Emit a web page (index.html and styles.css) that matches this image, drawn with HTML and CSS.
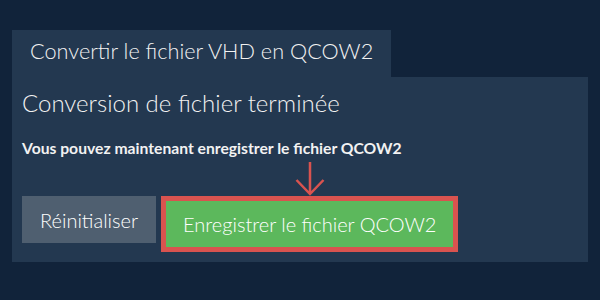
FILE: index.html
```html
<!DOCTYPE html>
<html lang="fr">
<head>
    <meta charset="UTF-8">
    <meta name="viewport" content="width=device-width, initial-scale=1.0">
    <title>Convertir le fichier VHD en QCOW2</title>
    <link rel="stylesheet" href="styles.css">
</head>
<body>

    <div class="container">
        <div class="tab">Convertir le fichier VHD en QCOW2</div>

        <div class="panel">
            <h2>Conversion de fichier terminée</h2>
            <p class="hint">Vous pouvez maintenant enregistrer le fichier QCOW2</p>

            <div class="arrow-row">
                <svg class="arrow" width="30" height="34" viewBox="0 0 30 34">
                    <path d="M15 0 V32 M1.5 18 L15 32 L28.5 18" fill="none" stroke="#d9534f" stroke-width="2.5"/>
                </svg>
            </div>

            <div class="actions">
                <button class="btn btn-reset">Réinitialiser</button>
                <button class="btn btn-save">Enregistrer le fichier QCOW2</button>
            </div>
        </div>
    </div>

</body>
</html>
```

FILE: styles.css
```css
body { margin: 0; background-color: #11233a; font-family: Lato, "Liberation Sans", sans-serif; color: #f2f2f2; }
.container { padding: 30px 12px 0 12px; }
.tab { display: inline-block; height: 42px; line-height: 42px; padding: 0 18px 5px 18px; background-color: #233850; font-size: 21.7px; font-weight: 300; }
.panel { background-color: #233850; padding: 11px 10px 10px 10px; }
.panel h2 { margin: 0; font-size: 24px; font-weight: 300; line-height: 30px; }
.hint { margin: 20px 0 0 0; font-size: 15.7px; font-weight: bold; line-height: 20px; }
.arrow-row { padding: 4px 0 0 273px; height: 38px; box-sizing: border-box; }
.arrow { display: block; }
.actions { display: flex; align-items: flex-start; gap: 5px; }
.btn { font-family: Lato, "Liberation Sans", sans-serif; font-size: 20px; font-weight: 300; color: #fff; border: none; cursor: pointer; }
.btn-reset { background-color: #4f5f70; height: 47px; padding: 0 18px; }
.btn-save { background-color: #5cb85c; height: 56px; padding: 0 17px; border: 5px solid #d9534f; }
```
